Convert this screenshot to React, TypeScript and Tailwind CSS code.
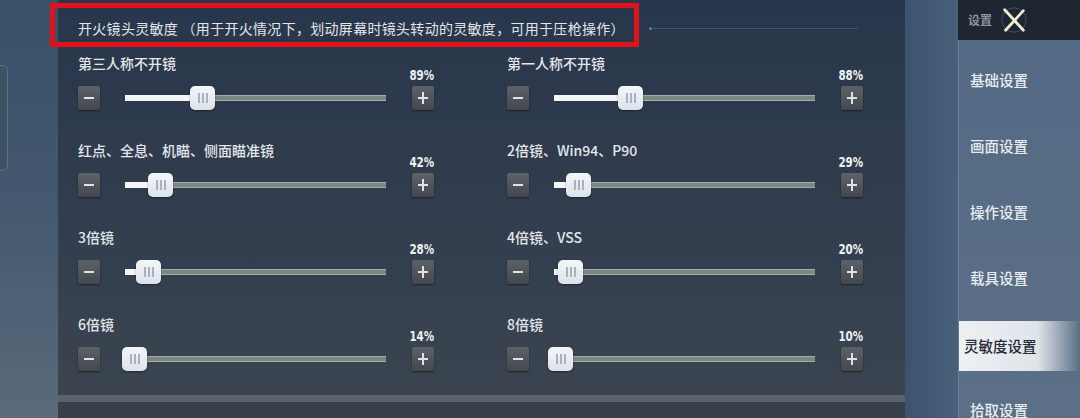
import React from 'react'

type Item = { label: string; pct: string; pos: number }

const rows: Item[] = [
  { label: '第三人称不开镜', pct: '89%', pos: 65 },
  { label: '第一人称不开镜', pct: '88%', pos: 64 },
  { label: '红点、全息、机瞄、侧面瞄准镜', pct: '42%', pos: 23 },
  { label: '2倍镜、Win94、P90', pct: '29%', pos: 12 },
  { label: '3倍镜', pct: '28%', pos: 11 },
  { label: '4倍镜、VSS', pct: '20%', pos: 4 },
  { label: '6倍镜', pct: '14%', pos: -3 },
  { label: '8倍镜', pct: '10%', pos: -6 },
]

const menu = ['基础设置', '画面设置', '操作设置', '载具设置', '灵敏度设置', '拾取设置']

const cjk = { fontFamily: '"Noto Sans CJK SC", "Noto Sans", sans-serif' }
const narrow = { fontFamily: '"DejaVu Sans Condensed", "Liberation Sans Narrow", "Roboto", sans-serif' }

const StepButton: React.FC<{ plus?: boolean }> = ({ plus }) => (
  <div className="relative flex h-[24px] w-[22px] items-center justify-center rounded-[2px] bg-gradient-to-b from-[#5d6168] to-[#43474e] shadow-[0_1px_2px_rgba(0,0,0,0.5)]">
    <div className="h-[2px] w-[10px] bg-[#dfe1e3]" />
    {plus && <div className="absolute h-[12px] w-[2px] bg-[#dfe1e3]" />}
  </div>
)

const Slider: React.FC<Item> = ({ label, pct, pos }) => (
  <div className="flex items-end">
    <div className="flex flex-col">
      <div className="text-[14px] font-medium leading-[20px] text-[#e3e7eb]" style={cjk}>
        {label}
      </div>
      <div className="mt-[13px] flex items-center">
        <StepButton />
        <div className="relative ml-[25px] flex h-[24px] w-[261px] items-center">
          <div className="h-[6px] w-full border-y border-[#a4ada8] bg-[#7b8783]" />
          <div
            className="absolute left-0 top-[9px] h-[6px] bg-[#f3f5f7]"
            style={{ width: Math.max(pos, 0) + 4 }}
          />
          <div
            className="absolute top-0 flex h-[24px] w-[25px] items-center justify-center gap-[2px] rounded-[5px] bg-gradient-to-b from-[#f4f6f9] to-[#dde2ea] shadow-[0_1px_2px_rgba(0,0,0,0.4)]"
            style={{ left: pos }}
          >
            <div className="h-[10px] w-[2px] bg-[#a9b1bd]" />
            <div className="h-[10px] w-[2px] bg-[#a9b1bd]" />
            <div className="h-[10px] w-[2px] bg-[#a9b1bd]" />
          </div>
        </div>
      </div>
    </div>
    <div className="ml-[26px] flex w-[22px] flex-col items-end">
      <div
        className="origin-right scale-x-[0.82] whitespace-nowrap text-[14px] font-bold leading-[12px] text-[#eef0f2]"
        style={narrow}
      >
        {pct}
      </div>
      <div className="mt-[5px]">
        <StepButton plus />
      </div>
    </div>
  </div>
)

export default function App() {
  return (
    <div className="relative h-[418px] w-[1080px] overflow-hidden bg-gradient-to-b from-[#3a5069] via-[#44596f] to-[#5a6a7a] [text-spacing-trim:space-all]">
      {/* left edge card outline */}
      <div className="absolute left-[-20px] top-[65px] h-[106px] w-[28px] rounded-[6px] border border-[#5f7478] bg-[#3c5066]" />

      <div className="flex h-full">
        <div className="w-[58px] shrink-0" />

        {/* main panel */}
        <div className="flex w-[847px] shrink-0 flex-col">
          <div className="flex h-[395px] shrink-0 flex-col bg-gradient-to-b from-[#28364b] via-[#313d4e] to-[#3b4450] pl-[20px] pr-[47px]">
            <div className="flex items-center pt-[18px]">
              <div
                className="whitespace-pre text-[14px] leading-[20px] tracking-[0.3px] text-[#e2e6eb]"
                style={cjk}
              >
                开火镜头灵敏度 （用于开火情况下，划动屏幕时镜头转动的灵敏度，可用于压枪操作）
              </div>
              <div className="ml-[24px] h-[3px] w-[3px] rounded-full bg-[#6b7a8e]" />
              <div className="h-px flex-1 bg-[#44536a]" />
            </div>
            <div className="mt-[15px] grid grid-cols-[355px_355px] gap-x-[74px] gap-y-[30px]">
              {rows.map(r => (
                <Slider key={r.label} {...r} />
              ))}
            </div>
          </div>
          <div className="h-[7px] shrink-0 bg-[#5a636e]" />
          <div className="flex-1 bg-[#383f4a]" />
        </div>

        {/* gap */}
        <div className="w-[53px] shrink-0 bg-gradient-to-r from-[#3d536d] to-[#48607b]" />

        {/* sidebar */}
        <div className="flex w-[122px] shrink-0 flex-col">
          <div className="flex h-[40px] shrink-0 items-center bg-[#1e2632] pl-[10px]">
            <span className="text-[12px] font-bold text-[#8e96a1]" style={cjk}>
              设置
            </span>
            <svg width="28" height="28" viewBox="0 0 30 30" className="ml-[8px]">
              <circle cx="15" cy="15" r="13" fill="none" stroke="#4a5262" strokeWidth="1" />
              <path d="M5 4 L25 26 M25 5 L6 26" stroke="#f1ebcf" strokeWidth="3" strokeLinecap="round" />
            </svg>
          </div>
          <div className="flex min-h-0 flex-1 flex-col overflow-hidden border-l border-[#6a7f96] bg-gradient-to-b from-[#546a84] to-[#5b6f86] pt-[7px]">
            {menu.map(m => {
              const active = m === '灵敏度设置'
              return (
                <div key={m} className="flex h-[66px] shrink-0 items-center">
                  {active ? (
                    <div className="mt-[4px] flex h-[50px] w-full items-center bg-gradient-to-r from-[#eef0f3] via-[#dfe4e9] via-65% to-transparent pl-[5px]">
                      <span className="text-[14.5px] font-medium text-[#262c38]" style={cjk}>
                        {m}
                      </span>
                    </div>
                  ) : (
                    <span className="pl-[11px] text-[14.5px] font-medium text-[#e8ecef]" style={cjk}>
                      {m}
                    </span>
                  )}
                </div>
              )
            })}
          </div>
        </div>
      </div>

      {/* red annotation box */}
      <div className="absolute left-[50px] top-[3px] h-[44px] w-[589px] border-[5px] border-[#e2121d]" />
    </div>
  )
}
